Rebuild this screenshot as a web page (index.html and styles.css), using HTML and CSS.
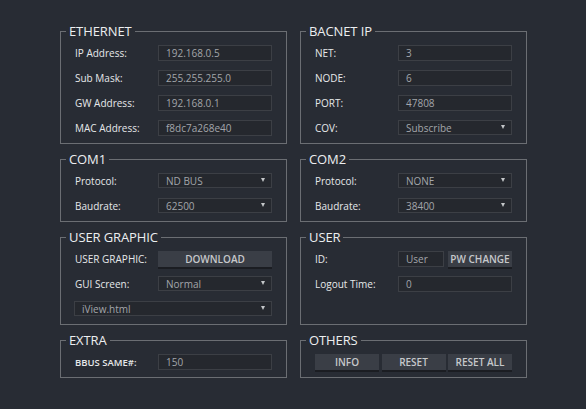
FILE: index.html
```html
<!DOCTYPE html>
<html lang="en">
<head>
<meta charset="utf-8">
<title>Settings</title>
<link rel="stylesheet" href="styles.css">
</head>
<body>
<main class="board">
  <fieldset class="panel">
    <legend>ETHERNET</legend>
    <div class="rows">
      <div class="row"><span class="label">IP Address:</span><span class="field">192.168.0.5</span></div>
      <div class="row"><span class="label">Sub Mask:</span><span class="field">255.255.255.0</span></div>
      <div class="row"><span class="label">GW Address:</span><span class="field">192.168.0.1</span></div>
      <div class="row"><span class="label">MAC Address:</span><span class="field">f8dc7a268e40</span></div>
    </div>
  </fieldset>
  <fieldset class="panel">
    <legend>BACNET IP</legend>
    <div class="rows">
      <div class="row"><span class="label">NET:</span><span class="field">3</span></div>
      <div class="row"><span class="label">NODE:</span><span class="field">6</span></div>
      <div class="row"><span class="label">PORT:</span><span class="field">47808</span></div>
      <div class="row"><span class="label">COV:</span><span class="field select">Subscribe<i class="arrow"></i></span></div>
    </div>
  </fieldset>
  <fieldset class="panel">
    <legend>COM1</legend>
    <div class="rows">
      <div class="row"><span class="label">Protocol:</span><span class="field select">ND BUS<i class="arrow"></i></span></div>
      <div class="row"><span class="label">Baudrate:</span><span class="field select">62500<i class="arrow"></i></span></div>
    </div>
  </fieldset>
  <fieldset class="panel">
    <legend>COM2</legend>
    <div class="rows">
      <div class="row"><span class="label">Protocol:</span><span class="field select">NONE<i class="arrow"></i></span></div>
      <div class="row"><span class="label">Baudrate:</span><span class="field select">38400<i class="arrow"></i></span></div>
    </div>
  </fieldset>
  <fieldset class="panel">
    <legend>USER GRAPHIC</legend>
    <div class="rows">
      <div class="row"><span class="label">USER GRAPHIC:</span><button class="btn" type="button">DOWNLOAD</button></div>
      <div class="row"><span class="label">GUI Screen:</span><span class="field select">Normal<i class="arrow"></i></span></div>
      <div class="row"><span class="field select wide">iView.html<i class="arrow"></i></span></div>
    </div>
  </fieldset>
  <fieldset class="panel">
    <legend>USER</legend>
    <div class="rows">
      <div class="row"><span class="label">ID:</span><span class="pair"><span class="field">User</span><button class="btn" type="button">PW CHANGE</button></span></div>
      <div class="row"><span class="label">Logout Time:</span><span class="field">0</span></div>
    </div>
  </fieldset>
  <fieldset class="panel">
    <legend>EXTRA</legend>
    <div class="rows">
      <div class="row"><span class="label small">BBUS SAME#:</span><span class="field">150</span></div>
    </div>
  </fieldset>
  <fieldset class="panel">
    <legend>OTHERS</legend>
    <div class="rows">
      <div class="buttons">
        <button class="btn" type="button">INFO</button>
        <button class="btn" type="button">RESET</button>
        <button class="btn" type="button">RESET ALL</button>
      </div>
    </div>
  </fieldset>
</main>
</body>
</html>
```
FILE: styles.css
```css
html, body {
  margin: 0;
  padding: 0;
  background: #282c34;
  height: 100%;
}
body {
  font-family: "Open Sans", "Noto Sans", sans-serif;
  color: #e4e6e8;
}
.board {
  display: grid;
  grid-template-columns: 227px 227px;
  column-gap: 13px;
  row-gap: 7px;
  margin: 0 0 0 60px;
  padding-top: 23px;
}
.panel {
  margin: 0;
  min-width: 0;
  border: 1px solid #6b6e73;
  padding: 0 14px 7px 14px;
}
.panel legend {
  margin-left: -9px;
  padding: 0 3px;
  font-size: 13px;
  line-height: 16px;
  color: #eceef0;
  letter-spacing: -0.1px;
}
.rows {
  display: flex;
  flex-direction: column;
  gap: 9px;
  padding-top: 6px;
}
.row {
  display: grid;
  grid-template-columns: 83px 114px;
  align-items: center;
  height: 16px;
}
.label {
  font-size: 10px;
  font-weight: 500;
  color: #e6e8ea;
  white-space: nowrap;
}
.label.small {
  font-size: 9.5px;
  font-weight: 600;
}
.field {
  position: relative;
  box-sizing: border-box;
  height: 16px;
  border: 1px solid #3c3f45;
  background: #25282e;
  padding-left: 7px;
  font-size: 10px;
  line-height: 14px;
  color: #a3a6ab;
  white-space: nowrap;
}
.field.select {
  height: 15px;
  line-height: 14px;
  align-self: start;
}
.field.wide {
  grid-column: 1 / -1;
  margin-left: -1px;
}
.arrow {
  position: absolute;
  right: 6px;
  top: 4px;
  width: 0;
  height: 0;
  border-left: 2.5px solid transparent;
  border-right: 2.5px solid transparent;
  border-top: 4px solid #c4c6c9;
}
.btn {
  box-sizing: border-box;
  height: 16px;
  margin: 0;
  padding: 0;
  border: 0;
  background: #3a3e46;
  box-shadow: 0 2px 0 #1b1d22;
  font-family: inherit;
  font-size: 10px;
  font-weight: 600;
  color: #c6c8cb;
  line-height: 16px;
  white-space: nowrap;
}
.pair {
  display: grid;
  grid-template-columns: 46px 64px;
  column-gap: 4px;
}
.buttons {
  display: grid;
  grid-template-columns: 64px 64px 64px;
  justify-content: space-between;
  height: 16px;
}
```
